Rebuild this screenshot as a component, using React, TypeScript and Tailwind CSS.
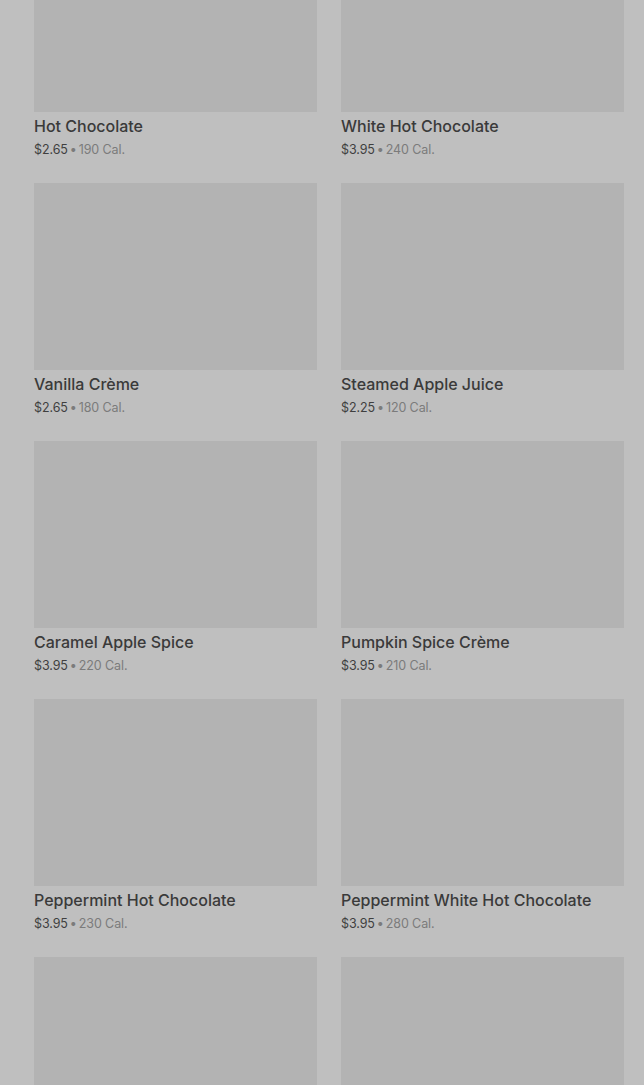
const items = [
  { name: "Hot Chocolate", price: "$2.65", cal: "190 Cal." },
  { name: "White Hot Chocolate", price: "$3.95", cal: "240 Cal." },
  { name: "Vanilla Crème", price: "$2.65", cal: "180 Cal." },
  { name: "Steamed Apple Juice", price: "$2.25", cal: "120 Cal." },
  { name: "Caramel Apple Spice", price: "$3.95", cal: "220 Cal." },
  { name: "Pumpkin Spice Crème", price: "$3.95", cal: "210 Cal." },
  { name: "Peppermint Hot Chocolate", price: "$3.95", cal: "230 Cal." },
  { name: "Peppermint White Hot Chocolate", price: "$3.95", cal: "280 Cal." },
  { name: "Salted Caramel Hot Chocolate", price: "$3.95", cal: "250 Cal." },
  { name: "Steamed Milk", price: "$2.25", cal: "150 Cal." },
];

function ProductCard({ name, price, cal }: { name: string; price: string; cal: string }) {
  return (
    <div className="flex flex-col">
      <div className="h-[187px] w-full bg-[#b3b3b3]" />
      <h3 className="mt-[2px] text-[16px] leading-6 font-medium text-[#3a3a3a]">
        {name}
      </h3>
      <p className="mt-[2px] text-[12.5px] leading-5 text-[#7b7b7b] tracking-[-0.1px]">
        <span className="text-[#3f3f3f]">{price}</span>
        <span className="mx-[2px]">•</span>
        {cal}
      </p>
    </div>
  );
}

export default function App() {
  return (
    <div
      className="h-[1085px] overflow-hidden bg-[#bfbfbf]"
      style={{ fontFamily: "Inter, Roboto, sans-serif" }}
    >
      <div className="-mt-[75px] grid grid-cols-2 gap-x-6 gap-y-[23px] pl-[34px] pr-[20px]">
        {items.map((item) => (
          <ProductCard key={item.name} {...item} />
        ))}
      </div>
    </div>
  );
}
